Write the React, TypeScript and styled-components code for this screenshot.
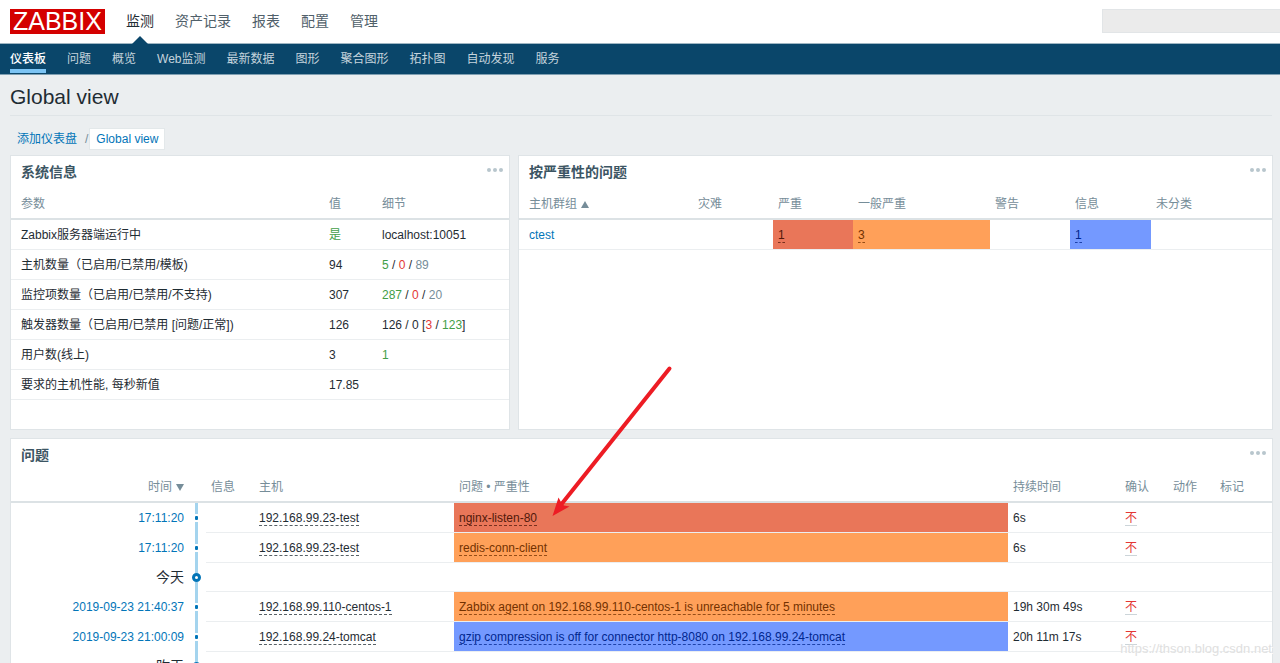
import React from "react";
import styled, { createGlobalStyle, css } from "styled-components";

const color = {
  page: "#ebeef0",
  nav: "#0a466a",
  text: "#1f2c33",
  muted: "#768d99",
  link: "#0275b8",
  green: "#429e47",
  red: "#e33734",
  line: "#ebeef0",
  border: "#dfe4e7",
};

type Severity = "high" | "average" | "info";

const severityStyle: Record<Severity, { back: string; fore: string }> = {
  high: { back: "#e97659", fore: "#52190b" },
  average: { back: "#ffa059", fore: "#733100" },
  info: { back: "#7499ff", fore: "#00268e" },
};

const GlobalStyle = createGlobalStyle`
  * { box-sizing: border-box; }
  body {
    margin: 0;
    background: ${color.page};
    color: ${color.text};
    font: 12px/14px "Liberation Sans", "Noto Sans CJK SC", sans-serif;
  }
  a { color: inherit; text-decoration: none; }
`;

const Page = styled.div`
  position: relative;
  height: 100vh;
  overflow: hidden;
`;

const Header = styled.header`
  display: flex;
  align-items: center;
  height: 44px;
  padding-left: 10px;
  background: #fff;
  border-bottom: 1px solid #9fb6c3;
`;

const Logo = styled.a`
  height: 25px;
  padding: 0 3px;
  background: #d40000;
  color: #fff;
  font-size: 25px;
  line-height: 25px;
`;

const MainMenu = styled.nav`
  display: flex;
  flex: 1;
  gap: 21px;
  margin-left: 21px;
`;

const MainLink = styled.a<{ $active?: boolean }>`
  position: relative;
  font-size: 14px;
  line-height: 42px;
  height: 44px;
  margin-bottom: -1px;
  color: ${(p) => (p.$active ? color.text : "#50606a")};
  ${(p) =>
    p.$active &&
    css`
      &::after {
        content: "";
        position: absolute;
        bottom: 0;
        left: 50%;
        margin-left: -8px;
        border: 8px solid transparent;
        border-top: 0;
        border-bottom-color: ${color.nav};
      }
    `}
`;

const Search = styled.input`
  width: 178px;
  height: 24px;
  margin-bottom: 1px;
  border: 1px solid #e2e5e7;
  border-right: 0;
  background: #ebebeb;
`;

const SubMenu = styled.nav`
  display: flex;
  gap: 21px;
  height: 31px;
  padding-left: 10px;
  background: ${color.nav};
  border-bottom: 1px solid #7f9fb2;
`;

const SubLink = styled.a<{ $active?: boolean }>`
  height: 29px;
  line-height: 30px;
  color: ${(p) => (p.$active ? "#fff" : "#c5d4dd")};
  font-weight: ${(p) => (p.$active ? 500 : 400)};
  border-bottom: ${(p) => (p.$active ? "4px solid #7cc4f4" : "0")};
`;

const Title = styled.h1`
  margin: 0 8px 0 10px;
  height: 41px;
  font-size: 21px;
  font-weight: 400;
  line-height: 44px;
  border-bottom: 1px solid ${color.border};
`;

const Crumbs = styled.nav`
  display: flex;
  align-items: center;
  height: 39px;
  padding: 6px 17px 0;
  color: ${color.link};
`;

const Slash = styled.span`
  margin: 0 2px 0 8px;
  color: ${color.muted};
`;

const Crumb = styled.a`
  padding: 3px 6px;
  background: #fff;
  box-shadow: 0 0 0 1px #e3e8ea;
`;

const Dashboard = styled.main`
  display: grid;
  grid-template-columns: 500fr 755fr;
  gap: 8px;
  padding: 0 7px 0 10px;
`;

const Panel = styled.section<{ $wide?: boolean }>`
  min-height: 275px;
  background: #fff;
  border: 1px solid ${color.border};
  ${(p) => p.$wide && "grid-column: 1 / -1;"}
`;

const PanelHead = styled.header`
  display: flex;
  justify-content: space-between;
  height: 33px;
  padding: 0 5px 0 10px;
`;

const PanelTitle = styled.h2`
  margin: 0;
  color: #3c5563;
  font-size: 14px;
  line-height: 33px;
`;

const MenuButton = styled.button`
  display: flex;
  align-items: center;
  height: 27px;
  padding: 0;
  border: 0;
  background: none;
`;

const Table = styled.table`
  width: 100%;
  table-layout: fixed;
  border-spacing: 0;
`;

const Col = styled.col<{ $w?: string }>`
  width: ${(p) => p.$w ?? "auto"};
`;

const Th = styled.th<{ $right?: boolean }>`
  height: 31px;
  padding: 1px 5px 0;
  border-bottom: 2px solid #dce2e5;
  color: ${color.muted};
  font-weight: 400;
  text-align: ${(p) => (p.$right ? "right" : "left")};
  white-space: nowrap;
  &:first-child { padding-left: 10px; }
`;

const Td = styled.td<{ $severity?: Severity; $plain?: boolean; $right?: boolean }>`
  height: 30px;
  padding: 0 5px;
  border-bottom: 1px solid ${(p) => (p.$plain ? "transparent" : color.line)};
  text-align: ${(p) => (p.$right ? "right" : "left")};
  white-space: nowrap;
  &:first-child { padding-left: 10px; }
  ${(p) =>
    p.$severity &&
    css`
      background: ${severityStyle[p.$severity].back};
      background-clip: padding-box;
      color: ${severityStyle[p.$severity].fore};
    `}
`;

const Hint = styled.a`
  border-bottom: 1px dashed color-mix(in srgb, currentColor 75%, transparent);
`;

const AckLink = styled(Hint)`
  color: ${color.red};
  border-bottom: 1px solid #ccd5d9;
`;

const Tone = styled.span<{ $tone: string }>`
  color: ${(p) => p.$tone};
`;

const Link = styled.a`
  color: ${color.link};
`;

const Arrow = styled.span<{ $down?: boolean }>`
  display: inline-block;
  margin-left: 4px;
  border: 4px solid transparent;
  ${(p) =>
    p.$down
      ? `border-bottom: 0; border-top: 7px solid ${color.muted};`
      : `border-top: 0; border-bottom: 7px solid ${color.muted};`}
`;

const TimeTh = styled(Th)`
  padding-right: 6px;
`;

const TimeTd = styled(Td)`
  padding-right: 6px;
  color: ${color.link};
`;

const DayTd = styled(Td)`
  height: 29px;
  padding-right: 6px;
  font-size: 14px;
`;

const DayRest = styled(Td)`
  height: 29px;
`;

const TrackTd = styled.td<{ $h: number }>`
  height: ${(p) => p.$h}px;
  padding: 0;
`;

const Track = styled.div<{ $h: number }>`
  display: flex;
  flex-direction: column;
  align-items: center;
  width: 13px;
  height: ${(p) => p.$h}px;
`;

const Rail = styled.span`
  flex: 1;
  width: 3px;
  background: #a4d4ee;
`;

const Dot = styled.span<{ $big?: boolean }>`
  width: ${(p) => (p.$big ? 9 : 3)}px;
  height: ${(p) => (p.$big ? 9 : 4)}px;
  margin: ${(p) => (p.$big ? "0" : "2px 0")};
  border-radius: ${(p) => (p.$big ? 5 : 1)}px;
  ${(p) => (p.$big ? `border: 3px solid ${color.link};` : `background: ${color.link};`)}
`;

const Pointer = styled.svg`
  position: absolute;
  left: 550px;
  top: 364px;
  pointer-events: none;
`;

const Watermark = styled.span`
  position: absolute;
  right: 8px;
  bottom: 7px;
  color: #e0e0e0;
  font-size: 13px;
  line-height: 15px;
  text-shadow: 1px 1px 0 #fff;
`;

const mainMenu = ["监测", "资产记录", "报表", "配置", "管理"];
const subMenu = ["仪表板", "问题", "概览", "Web监测", "最新数据", "图形", "聚合图形", "拓扑图", "自动发现", "服务"];

const G = ({ children }: { children: React.ReactNode }) => <Tone $tone={color.green}>{children}</Tone>;
const R = ({ children }: { children: React.ReactNode }) => <Tone $tone={color.red}>{children}</Tone>;
const M = ({ children }: { children: React.ReactNode }) => <Tone $tone={color.muted}>{children}</Tone>;

const systemRows: [string, React.ReactNode, React.ReactNode][] = [
  ["Zabbix服务器端运行中", <G>是</G>, "localhost:10051"],
  ["主机数量（已启用/已禁用/模板)", "94", <><G>5</G> / <R>0</R> / <M>89</M></>],
  ["监控项数量（已启用/已禁用/不支持)", "307", <><G>287</G> / <R>0</R> / <M>20</M></>],
  ["触发器数量（已启用/已禁用 [问题/正常])", "126", <>126 / 0 [<R>3</R> / <G>123</G>]</>],
  ["用户数(线上)", "3", <G>1</G>],
  ["要求的主机性能, 每秒新值", "17.85", ""],
];

const severityCells: { count?: string; severity?: Severity }[] = [
  {},
  { count: "1", severity: "high" },
  { count: "3", severity: "average" },
  {},
  { count: "1", severity: "info" },
  {},
];

type Entry =
  | { day: string }
  | { time: string; host: string; problem: string; severity: Severity; duration: string };

const entries: Entry[] = [
  { time: "17:11:20", host: "192.168.99.23-test", problem: "nginx-listen-80", severity: "high", duration: "6s" },
  { time: "17:11:20", host: "192.168.99.23-test", problem: "redis-conn-client", severity: "average", duration: "6s" },
  { day: "今天" },
  {
    time: "2019-09-23 21:40:37",
    host: "192.168.99.110-centos-1",
    problem: "Zabbix agent on 192.168.99.110-centos-1 is unreachable for 5 minutes",
    severity: "average",
    duration: "19h 30m 49s",
  },
  {
    time: "2019-09-23 21:00:09",
    host: "192.168.99.24-tomcat",
    problem: "gzip compression is off for connector http-8080 on 192.168.99.24-tomcat",
    severity: "info",
    duration: "20h 11m 17s",
  },
  { day: "昨天" },
];

function Head({ title }: { title: string }) {
  return (
    <PanelHead>
      <PanelTitle>{title}</PanelTitle>
      <MenuButton type="button" aria-label={`${title} 菜单`}>
        <svg width="18" height="6" fill="#b8c6cd">
          <circle cx="3" cy="3" r="2" />
          <circle cx="9" cy="3" r="2" />
          <circle cx="15" cy="3" r="2" />
        </svg>
      </MenuButton>
    </PanelHead>
  );
}

function EntryRow({ entry }: { entry: Entry }) {
  if ("day" in entry) {
    return (
      <tr>
        <DayTd $plain $right>{entry.day}</DayTd>
        <TrackTd $h={29}>
          <Track $h={29}><Rail /><Dot $big /><Rail /></Track>
        </TrackTd>
        <DayRest colSpan={7} />
      </tr>
    );
  }
  return (
    <tr>
      <TimeTd $plain $right><a href="#event">{entry.time}</a></TimeTd>
      <TrackTd $h={30}>
        <Track $h={30}><Rail /><Dot /><Rail /></Track>
      </TrackTd>
      <Td />
      <Td><Hint href="#host">{entry.host}</Hint></Td>
      <Td $severity={entry.severity}><Hint href="#problem">{entry.problem}</Hint></Td>
      <Td>{entry.duration}</Td>
      <Td><AckLink href="#ack">不</AckLink></Td>
      <Td />
      <Td />
    </tr>
  );
}

export default function App() {
  return (
    <Page>
      <GlobalStyle />
      <Header>
        <Logo href="#home">ZABBIX</Logo>
        <MainMenu>
          {mainMenu.map((label, i) => (
            <MainLink key={label} href="#menu" $active={i === 0}>{label}</MainLink>
          ))}
        </MainMenu>
        <Search type="text" aria-label="搜索" />
      </Header>
      <SubMenu>
        {subMenu.map((label, i) => (
          <SubLink key={label} href="#section" $active={i === 0}>{label}</SubLink>
        ))}
      </SubMenu>
      <Title>Global view</Title>
      <Crumbs>
        <a href="#dashboards">添加仪表盘</a>
        <Slash>/</Slash>
        <Crumb href="#global">Global view</Crumb>
      </Crumbs>

      <Dashboard>
        <Panel>
          <Head title="系统信息" />
          <Table>
            <colgroup><Col $w="313px" /><Col $w="53px" /><Col /></colgroup>
            <thead>
              <tr><Th>参数</Th><Th>值</Th><Th>细节</Th></tr>
            </thead>
            <tbody>
              {systemRows.map(([name, value, detail]) => (
                <tr key={name}><Td>{name}</Td><Td>{value}</Td><Td>{detail}</Td></tr>
              ))}
            </tbody>
          </Table>
        </Panel>

        <Panel>
          <Head title="按严重性的问题" />
          <Table>
            <colgroup>
              <Col /><Col $w="80px" /><Col $w="80px" /><Col $w="137px" />
              <Col $w="80px" /><Col $w="81px" /><Col $w="121px" />
            </colgroup>
            <thead>
              <tr>
                <Th>主机群组<Arrow /></Th>
                <Th>灾难</Th><Th>严重</Th><Th>一般严重</Th><Th>警告</Th><Th>信息</Th><Th>未分类</Th>
              </tr>
            </thead>
            <tbody>
              <tr>
                <Td><Link href="#group">ctest</Link></Td>
                {severityCells.map((cell, i) => (
                  <Td key={i} $severity={cell.severity}>
                    {cell.count && <Hint href="#severity">{cell.count}</Hint>}
                  </Td>
                ))}
              </tr>
            </tbody>
          </Table>
        </Panel>

        <Panel $wide>
          <Head title="问题" />
          <Table>
            <colgroup>
              <Col $w="179px" /><Col $w="16px" /><Col $w="48px" /><Col $w="200px" /><Col />
              <Col $w="112px" /><Col $w="48px" /><Col $w="47px" /><Col $w="57px" />
            </colgroup>
            <thead>
              <tr>
                <TimeTh $right>时间<Arrow $down /></TimeTh>
                <Th /><Th>信息</Th><Th>主机</Th><Th>问题 • 严重性</Th>
                <Th>持续时间</Th><Th>确认</Th><Th>动作</Th><Th>标记</Th>
              </tr>
            </thead>
            <tbody>
              {entries.map((entry, i) => <EntryRow key={i} entry={entry} />)}
            </tbody>
          </Table>
        </Panel>
      </Dashboard>

      <Pointer width="124" height="156" viewBox="550 364 124 156" aria-hidden="true">
        <path d="M669.5 368.5 L562 503.5" stroke="#ed1c24" strokeWidth="4" strokeLinecap="round" />
        <path d="M552.5 516 L558.5 497.5 L561.5 503 L564 505.5 L569.5 506.5 Z" fill="#ed1c24" />
      </Pointer>
      <Watermark>https://thson.blog.csdn.net</Watermark>
    </Page>
  );
}
